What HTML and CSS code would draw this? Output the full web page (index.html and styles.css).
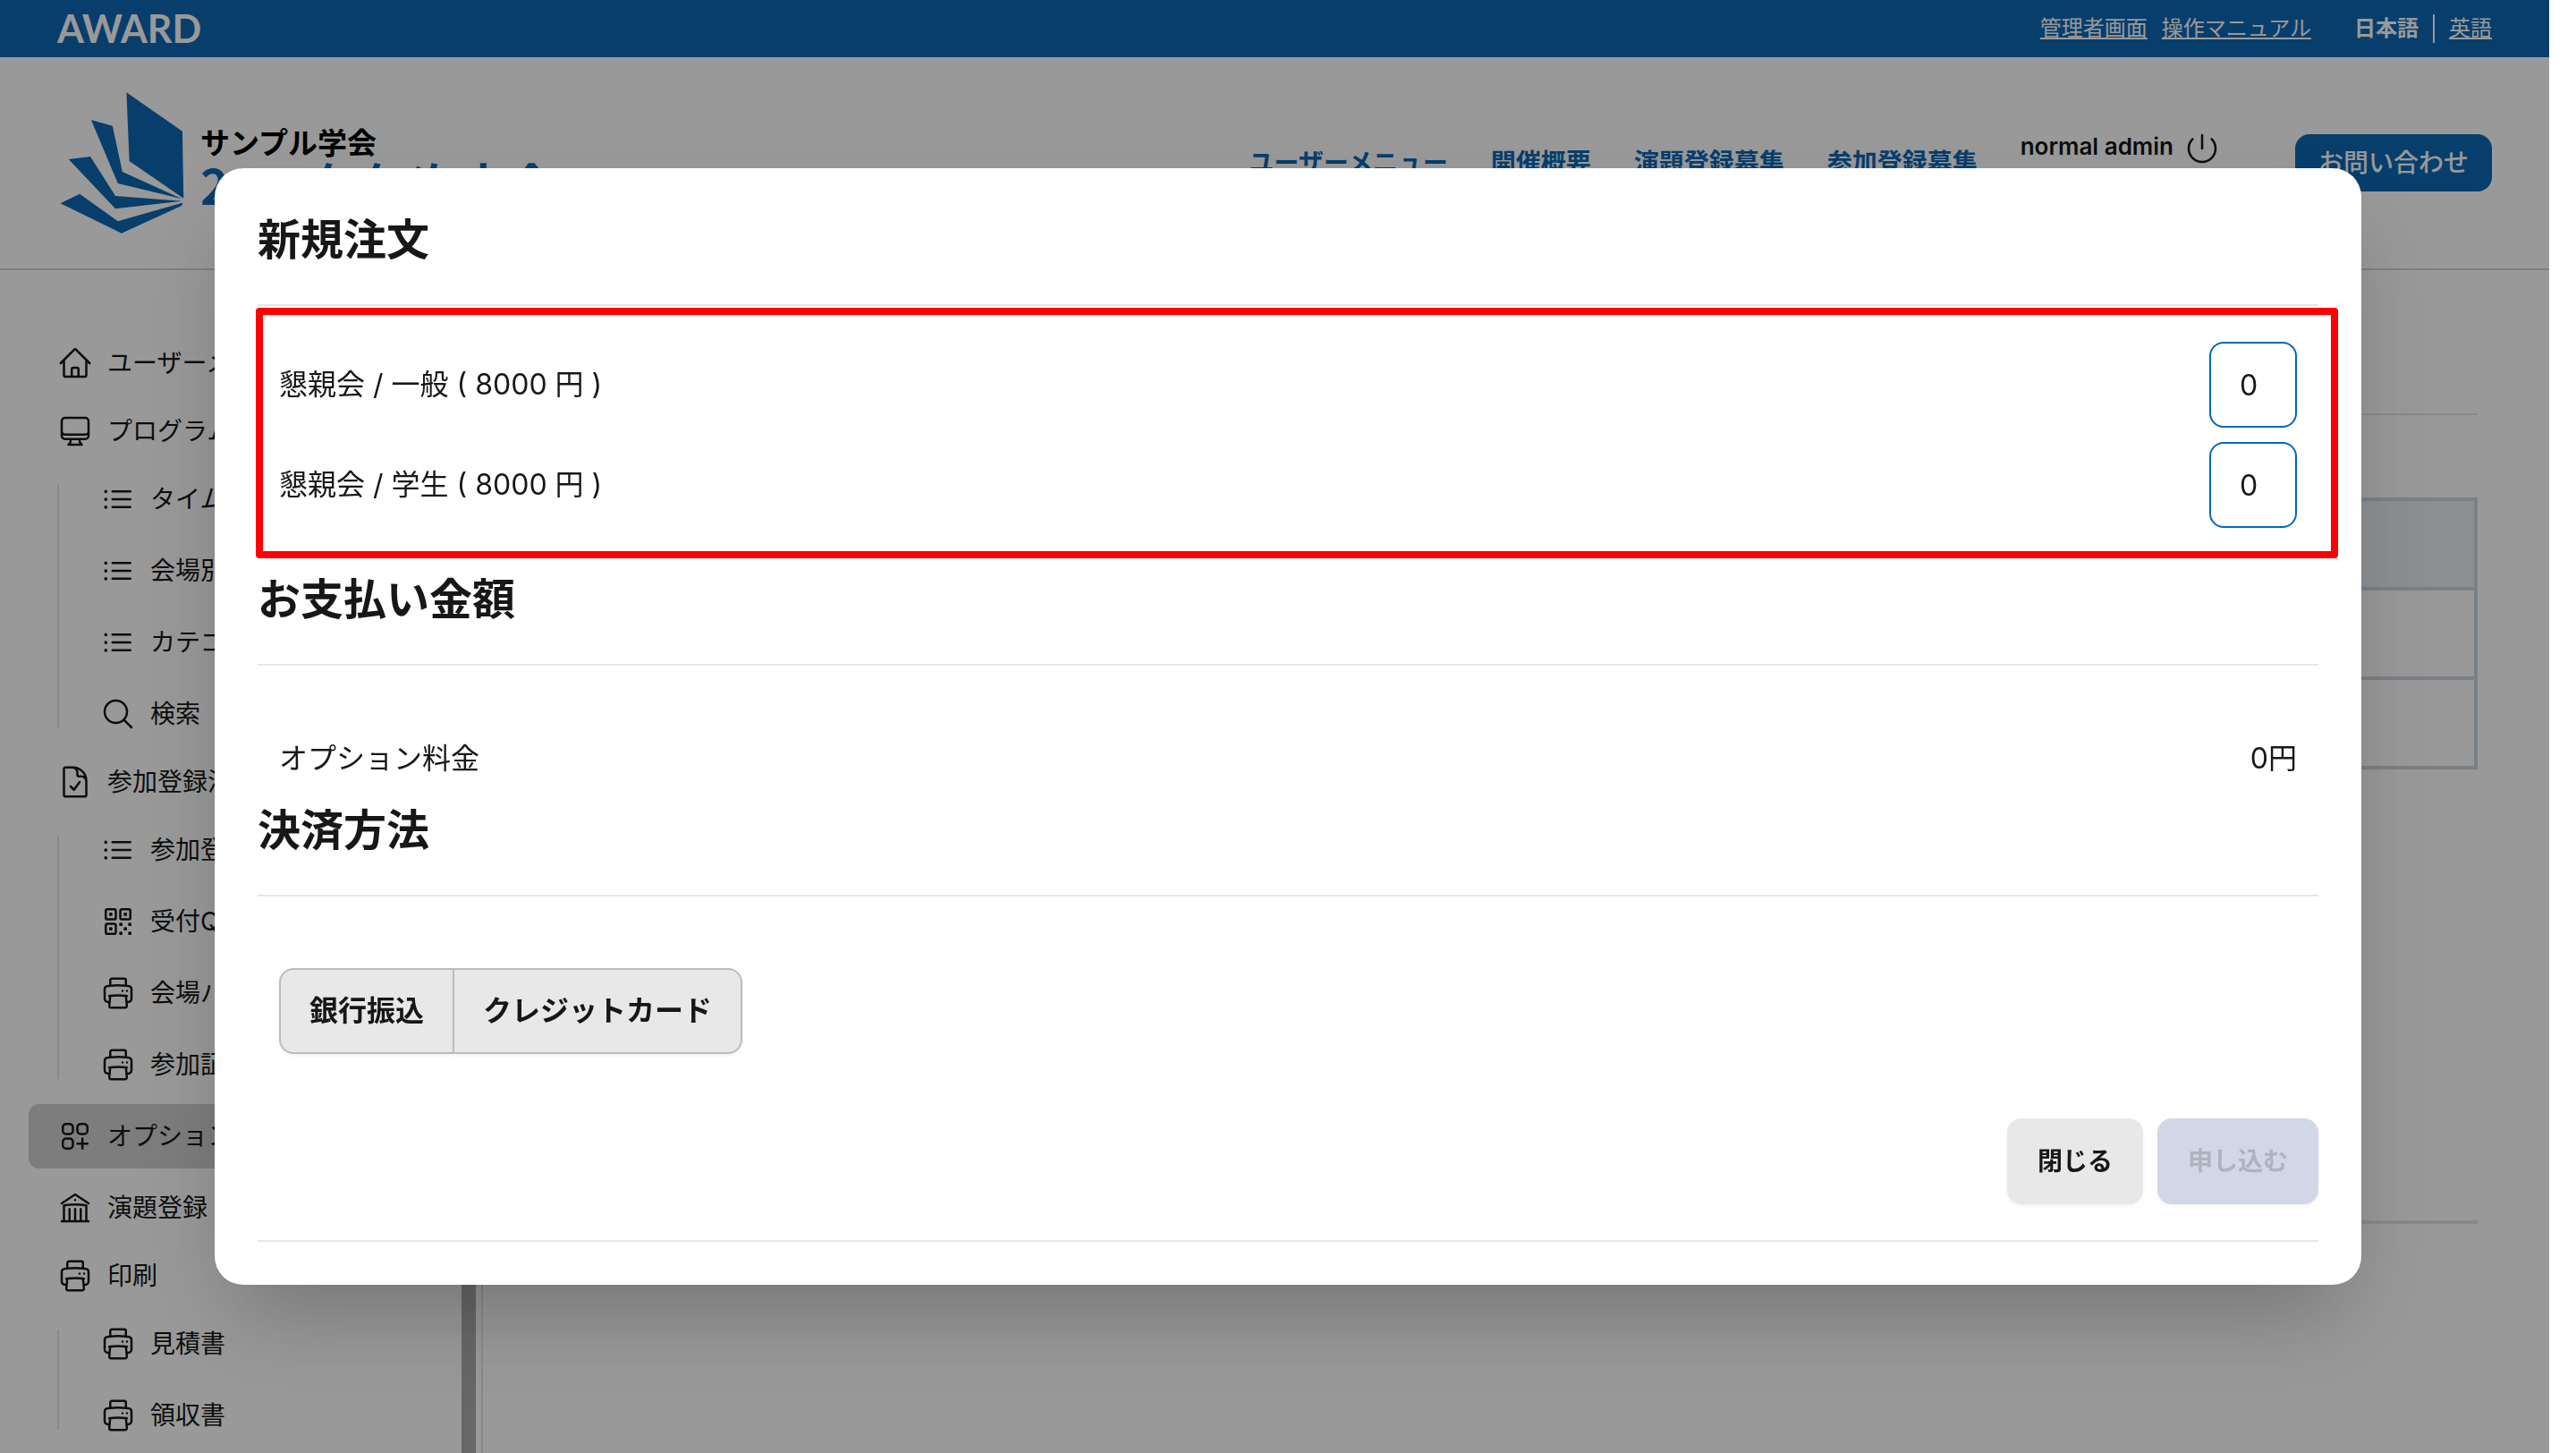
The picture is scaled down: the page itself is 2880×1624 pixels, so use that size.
FILE: index.html
```html
<!DOCTYPE html>
<html lang="ja">
<head>
  <meta charset="UTF-8" />
  <meta name="viewport" content="width=device-width, initial-scale=1.0"/>
  <title>オプション - サンプル学会</title>
  <link rel="stylesheet" href="styles.css">
</head>
<body>
  <!-- icons -->
  <svg class="sprite" aria-hidden="true">
    <symbol id="i-home" viewBox="0 0 24 24"><path d="m2.25 12 8.954-8.955c.44-.439 1.152-.439 1.591 0L21.75 12M4.5 9.75v10.125c0 .621.504 1.125 1.125 1.125H9.75v-4.875c0-.621.504-1.125 1.125-1.125h2.25c.621 0 1.125.504 1.125 1.125V21h4.125c.621 0 1.125-.504 1.125-1.125V9.75M8.25 21h8.25"/></symbol>
    <symbol id="i-desktop" viewBox="0 0 24 24"><path d="M9 17.25v1.007a3 3 0 0 1-.879 2.122L7.5 21h9l-.621-.621A3 3 0 0 1 15 18.257V17.25m6-12V15a2.25 2.25 0 0 1-2.25 2.25H5.25A2.25 2.25 0 0 1 3 15V5.25m18 0A2.25 2.25 0 0 0 18.75 3H5.25A2.25 2.25 0 0 0 3 5.25m18 0V12a2.25 2.25 0 0 1-2.25 2.25H5.25A2.25 2.25 0 0 1 3 12V5.25"/></symbol>
    <symbol id="i-list" viewBox="0 0 24 24"><path d="M8.25 6.75h12M8.25 12h12m-12 5.25h12M3.75 6.75h.007v.008H3.75V6.75Zm.375 0a.375.375 0 1 1-.75 0 .375.375 0 0 1 .75 0ZM3.75 12h.007v.008H3.75V12Zm.375 0a.375.375 0 1 1-.75 0 .375.375 0 0 1 .75 0Zm-.375 5.25h.007v.008H3.75v-.008Zm.375 0a.375.375 0 1 1-.75 0 .375.375 0 0 1 .75 0Z"/></symbol>
    <symbol id="i-search" viewBox="0 0 24 24"><path d="m21 21-5.197-5.197m0 0A7.5 7.5 0 1 0 5.196 5.196a7.5 7.5 0 0 0 10.607 10.607Z"/></symbol>
    <symbol id="i-doc" viewBox="0 0 24 24"><path d="M10.125 2.25h-4.5c-.621 0-1.125.504-1.125 1.125v17.25c0 .621.504 1.125 1.125 1.125h12.75c.621 0 1.125-.504 1.125-1.125v-9M10.125 2.25h.375a9 9 0 0 1 9 9v.375M10.125 2.25A3.375 3.375 0 0 1 13.5 5.625v1.5c0 .621.504 1.125 1.125 1.125h1.5a3.375 3.375 0 0 1 3.375 3.375M9 15l2.25 2.25L15 12"/></symbol>
    <symbol id="i-qr" viewBox="0 0 24 24"><rect x="3.75" y="3.75" width="6.75" height="6.75" rx="1.125"/><rect x="13.5" y="3.75" width="6.75" height="6.75" rx="1.125"/><rect x="3.75" y="13.5" width="6.75" height="6.75" rx="1.125"/><path d="M6.75 6.75h.75v.75h-.75v-.75ZM6.75 16.5h.75v.75h-.75v-.75ZM16.5 6.75h.75v.75h-.75v-.75ZM13.5 13.5h.75v.75h-.75v-.75ZM13.5 19.5h.75v.75h-.75v-.75ZM19.5 13.5h.75v.75h-.75v-.75ZM19.5 19.5h.75v.75h-.75v-.75ZM16.5 16.5h.75v.75h-.75v-.75Z"/></symbol>
    <symbol id="i-printer" viewBox="0 0 24 24"><path d="M6.72 13.829c-.24.03-.48.062-.72.096m.72-.096a42.415 42.415 0 0 1 10.56 0m-10.56 0L6.34 18m10.94-4.171c.24.03.48.062.72.096m-.72-.096L17.66 18m0 0 .229 2.523a1.125 1.125 0 0 1-1.12 1.227H7.231c-.662 0-1.18-.568-1.12-1.227L6.34 18m11.318 0h1.091A2.25 2.25 0 0 0 21 15.75V9.456c0-1.081-.768-2.015-1.837-2.175a48.055 48.055 0 0 0-1.913-.247M6.34 18H5.25A2.25 2.25 0 0 1 3 15.75V9.456c0-1.081.768-2.015 1.837-2.175a48.041 48.041 0 0 1 1.913-.247m10.5 0a48.536 48.536 0 0 0-10.5 0m10.5 0V3.375c0-.621-.504-1.125-1.125-1.125h-8.25c-.621 0-1.125.504-1.125 1.125v3.659M18 10.5h.008v.008H18V10.5Zm-3 0h.008v.008H15V10.5Z"/></symbol>
    <symbol id="i-option" viewBox="0 0 24 24"><path d="M13.5 16.875h3.375m0 0h3.375m-3.375 0V13.5m0 3.375v3.375M6 10.5h2.25a2.25 2.25 0 0 0 2.25-2.25V6a2.25 2.25 0 0 0-2.25-2.25H6A2.25 2.25 0 0 0 3.75 6v2.25A2.25 2.25 0 0 0 6 10.5Zm0 9.75h2.25A2.25 2.25 0 0 0 10.5 18v-2.25a2.25 2.25 0 0 0-2.25-2.25H6a2.25 2.25 0 0 0-2.25 2.25V18A2.25 2.25 0 0 0 6 20.25Zm9.75-9.75H18a2.25 2.25 0 0 0 2.25-2.25V6A2.25 2.25 0 0 0 18 3.75h-2.25A2.25 2.25 0 0 0 13.5 6v2.25a2.25 2.25 0 0 0 2.25 2.25Z"/></symbol>
    <symbol id="i-library" viewBox="0 0 24 24"><path d="M12 21v-8.25M15.75 21v-8.25M8.25 21v-8.25M3 9l9-6 9 6m-1.5 12V10.332A48.36 48.36 0 0 0 12 9.75c-2.55 0-5.056.2-7.5.582V21M3 21h18M12 6.75h.008v.008H12V6.75Z"/></symbol>
    <symbol id="i-power" viewBox="0 0 24 24"><path d="M5.636 5.636a9 9 0 1 0 12.728 0M12 3v9"/></symbol>
  </svg>

  <div class="page">
    <div class="topbar">
      <a href="#" class="brand">AWARD</a>
      <div class="topbar-links">
        <a href="#">管理者画面</a>
        <a href="#">操作マニュアル</a>
      </div>
      <div class="lang">
        <strong>日本語</strong>
        <a href="#">英語</a>
      </div>
    </div>

    <header class="header">
      <a href="#" class="logo">
        <svg class="logo-mark" viewBox="64 102 144 160" aria-hidden="true">
          <path d="M141.4 103.3 203.9 146.7 205.2 221.7 144.6 180Z"/>
          <path d="M101.9 134 125.8 140.7 136.8 192 203.4 222.3 131.8 205Z"/>
          <path d="M76.7 178 101 175 129 219 203.4 224.7 129 233.3Z"/>
          <path d="M67.5 227.3 89 216.7 131.8 247.3 204.5 226.5 203 230 135.9 260.7Z"/>
        </svg>
        <span class="logo-text">
          <span class="logo-org">サンプル学会</span>
          <span class="logo-event">2025年年次大会</span>
        </span>
      </a>
      <nav class="nav">
        <a href="#">ユーザーメニュー</a>
        <a href="#">開催概要</a>
        <a href="#">演題登録募集</a>
        <a href="#">参加登録募集</a>
      </nav>
      <div class="user">
        <span>normal admin</span>
        <button type="button" class="logout" aria-label="ログアウト"><svg class="icon"><use href="#i-power"/></svg></button>
      </div>
      <a href="#" class="contact">お問い合わせ</a>
    </header>

    <div class="content">
      <aside class="sidebar">
        <ul class="menu">
          <li><a href="#" class="item"><svg class="icon"><use href="#i-home"/></svg>ユーザーメニュー</a></li>
          <li>
            <div class="item item-title"><svg class="icon"><use href="#i-desktop"/></svg>プログラム</div>
            <ul class="submenu">
              <li><a href="#" class="item"><svg class="icon"><use href="#i-list"/></svg>タイムテーブル</a></li>
              <li><a href="#" class="item"><svg class="icon"><use href="#i-list"/></svg>会場別</a></li>
              <li><a href="#" class="item"><svg class="icon"><use href="#i-list"/></svg>カテゴリ</a></li>
              <li><a href="#" class="item"><svg class="icon"><use href="#i-search"/></svg>検索</a></li>
            </ul>
          </li>
          <li>
            <div class="item item-title"><svg class="icon"><use href="#i-doc"/></svg>参加登録済</div>
            <ul class="submenu">
              <li><a href="#" class="item"><svg class="icon"><use href="#i-list"/></svg>参加登録</a></li>
              <li><a href="#" class="item"><svg class="icon"><use href="#i-qr"/></svg>受付QR</a></li>
              <li><a href="#" class="item"><svg class="icon"><use href="#i-printer"/></svg>会場バッジ</a></li>
              <li><a href="#" class="item"><svg class="icon"><use href="#i-printer"/></svg>参加証</a></li>
            </ul>
          </li>
          <li><a href="#" class="item active"><svg class="icon"><use href="#i-option"/></svg>オプション</a></li>
          <li><a href="#" class="item"><svg class="icon"><use href="#i-library"/></svg>演題登録</a></li>
          <li>
            <div class="item item-title"><svg class="icon"><use href="#i-printer"/></svg>印刷</div>
            <ul class="submenu">
              <li><a href="#" class="item"><svg class="icon"><use href="#i-printer"/></svg>見積書</a></li>
              <li><a href="#" class="item"><svg class="icon"><use href="#i-printer"/></svg>領収書</a></li>
            </ul>
          </li>
        </ul>
        <div class="scroll-thumb"></div>
      </aside>

      <main class="main">
        <hr class="main-line">
        <table class="orders">
          <thead><tr><th></th></tr></thead>
          <tbody>
            <tr><td></td></tr>
            <tr><td></td></tr>
          </tbody>
        </table>
        <hr class="main-line thick">
      </main>
    </div>
    <div class="backdrop"></div>
  </div>

  <div class="modal">
    <form class="modal-box" role="dialog" aria-labelledby="modal-title">
      <h2 id="modal-title">新規注文</h2>
      <hr>
      <div class="modal-body items">
        <div class="row">
          <label for="qty-general">懇親会 / 一般 ( 8000 円 )</label>
          <input type="number" id="qty-general" min="0" value="0">
        </div>
        <div class="row">
          <label for="qty-student">懇親会 / 学生 ( 8000 円 )</label>
          <input type="number" id="qty-student" min="0" value="0">
        </div>
      </div>

      <h2>お支払い金額</h2>
      <hr>
      <div class="modal-body amount">
        <div class="row">
          <span>オプション料金</span>
          <span>0円</span>
        </div>
      </div>

      <h2>決済方法</h2>
      <hr>
      <div class="modal-body payment">
        <div class="join">
          <button type="button">銀行振込</button>
          <button type="button">クレジットカード</button>
        </div>
      </div>

      <div class="actions">
        <button type="button" class="btn">閉じる</button>
        <button type="submit" class="btn" disabled>申し込む</button>
      </div>
      <hr>
      <div class="highlight"></div>
    </form>
  </div>
</body>
</html>
```
FILE: styles.css
```css
* {
  box-sizing: border-box;
}
body {
  margin: 0;
  padding-right: 30px;
  background: #fff;
  color: #171717;
  font-family: Inter, "Noto Sans CJK JP", sans-serif;
  font-size: 28px;
  line-height: 40px;
}
a {
  color: inherit;
  text-decoration: none;
}
ul {
  list-style: none;
  margin: 0;
  padding: 0;
}
button, input {
  font-family: inherit;
  line-height: inherit;
  color: inherit;
}
.sprite {
  position: absolute;
  width: 0;
  height: 0;
}
.icon {
  width: 40px;
  height: 40px;
  flex: none;
  fill: none;
  stroke: currentColor;
  stroke-width: 1.5;
  stroke-linecap: round;
  stroke-linejoin: round;
}
.page {
  position: relative;
  height: 100vh;
  display: flex;
  flex-direction: column;
  overflow: hidden;
}

/* top bar */
.topbar {
  background: #0d68b5;
  color: #fff;
  height: 64px;
  padding: 0 64px;
  display: flex;
  align-items: center;
  font-size: 24px;
  line-height: 32px;
  flex: none;
}
.topbar a {
  text-decoration: underline;
}
.topbar .brand {
  font-family: Lato, sans-serif;
  font-size: 43px;
  font-weight: 700;
  text-decoration: none;
  margin-right: auto;
}
.topbar-links {
  display: flex;
  gap: 16px;
}
.lang {
  display: flex;
  align-items: center;
  margin-left: 48px;
}
.lang strong {
  border-right: 2px solid #fff;
  padding-right: 16px;
  margin-right: 16px;
}

/* header */
.header {
  display: flex;
  align-items: center;
  height: 238px;
  padding: 0 64px;
  border-bottom: 2px solid #d4d4d4;
  flex: none;
}
.logo {
  display: flex;
  align-items: center;
  gap: 16px;
  margin-right: auto;
}
.logo-mark {
  width: 144px;
  height: 160px;
  fill: #0d68b5;
}
.logo-text {
  display: flex;
  flex-direction: column;
  font-family: "Noto Sans CJK JP", sans-serif;
  font-weight: 700;
  line-height: 48px;
}
.logo-org {
  color: #000;
  font-size: 33px;
}
.logo-event {
  color: #0d68b5;
  font-size: 54px;
}
.nav {
  display: flex;
  gap: 48px;
  color: #0d68b5;
  font-weight: 700;
}
.user {
  display: flex;
  align-items: flex-start;
  gap: 12px;
  margin: 0 84px 32px 48px;
  font-size: 26px;
  font-weight: 600;
  line-height: 36px;
}
.logout {
  display: flex;
  padding: 0;
  border: none;
  background: none;
  cursor: pointer;
}
.contact {
  background: #0d68b5;
  color: #fff;
  padding: 0 26px;
  line-height: 64px;
  border-radius: 16px;
  font-weight: 500;
}

/* sidebar */
.content {
  display: flex;
  flex: 1;
  min-height: 0;
}
.sidebar {
  width: 540px;
  flex: none;
  display: flex;
  padding: 0 6px 0 32px;
  border-right: 2px solid #e5e5e5;
}
.menu {
  flex: 1;
  padding: 68px 16px 0 0;
}
.menu, .submenu {
  display: flex;
  flex-direction: column;
  gap: 8px;
}
.item {
  display: flex;
  align-items: center;
  gap: 16px;
  height: 72px;
  padding: 0 32px;
  border-radius: 12px;
  white-space: nowrap;
}
.item-title {
  height: 64px;
  margin-bottom: 8px;
}
.item.active {
  background: #d1d1d1;
}
.submenu {
  position: relative;
  padding-left: 48px;
}
.submenu::before {
  content: "";
  position: absolute;
  left: 32px;
  top: 20px;
  bottom: 20px;
  width: 2px;
  background: #e5e5e5;
}
.scroll-thumb {
  width: 16px;
  background: #acacac;
}

/* main */
.main {
  flex: 1;
  padding: 160px 80px 0;
}
.main-line {
  border: none;
  height: 2px;
  margin: 0 0 92px;
  background: #e5e5e5;
}
.main-line.thick {
  height: 4px;
  margin: 504px 0 0;
}
.orders {
  width: 100%;
  border-collapse: collapse;
}
.orders th, .orders td {
  height: 100px;
  border: 4px solid #cbd5e1;
}
.orders th {
  background: #e9f1f5;
}

/* modal */
.backdrop {
  position: absolute;
  inset: 0;
  background: rgba(0,0,0,0.4);
}
.modal {
  position: fixed;
  inset: 0;
  display: flex;
  align-items: center;
  justify-content: center;
}
.modal-box {
  position: relative;
  width: 91%;
  max-width: 2400px;
  padding: 48px;
  background: #fff;
  border-radius: 32px;
  box-shadow: 0 50px 100px -24px rgba(0,0,0,0.25);
  font-size: 32px;
}
.modal-box h2 {
  margin: 0;
  font-size: 48px;
  line-height: 64px;
}
.modal-box hr {
  border: none;
  height: 2px;
  margin: 40px 0 0;
  background: #e5e7eb;
}
.modal-body {
  padding: 40px 24px 48px;
}
.items {
  display: flex;
  flex-direction: column;
  gap: 16px;
}
.amount {
  padding: 80px 24px 24px;
}
.payment {
  padding: 80px 24px 72px;
}
.row {
  display: flex;
  justify-content: space-between;
  align-items: center;
  line-height: 48px;
}
.row input {
  width: 98px;
  height: 96px;
  padding: 0 0 0 32px;
  border: 2px solid #0068b7;
  border-radius: 16px;
  background: #fff;
  font-size: 32px;
  appearance: textfield;
}
.join {
  display: flex;
}
.join button {
  height: 96px;
  padding: 0 32px;
  border: 2px solid #bcbcbc;
  background: #e8e8e8;
  font-size: 32px;
  font-weight: 600;
  box-shadow: 0 2px 4px rgba(0,0,0,0.05);
}
.join button:first-child {
  border-right: none;
  border-radius: 16px 0 0 16px;
}
.join button:last-child {
  border-radius: 0 16px 16px 0;
}
.actions {
  display: flex;
  justify-content: flex-end;
  gap: 16px;
}
.btn {
  height: 96px;
  padding: 0 34px;
  border: none;
  border-radius: 16px;
  background: #e8e8e8;
  font-size: 28px;
  font-weight: 600;
  box-shadow: 0 2px 4px rgba(0,0,0,0.05);
}
.btn:disabled {
  background: #d2d7e7;
  color: #aeb3c0;
}
/* red frame round the order rows */
.highlight {
  position: absolute;
  top: 156px;
  left: 46px;
  right: 26px;
  height: 280px;
  border: 8px solid #f00;
  border-radius: 4px;
  pointer-events: none;
}
```
